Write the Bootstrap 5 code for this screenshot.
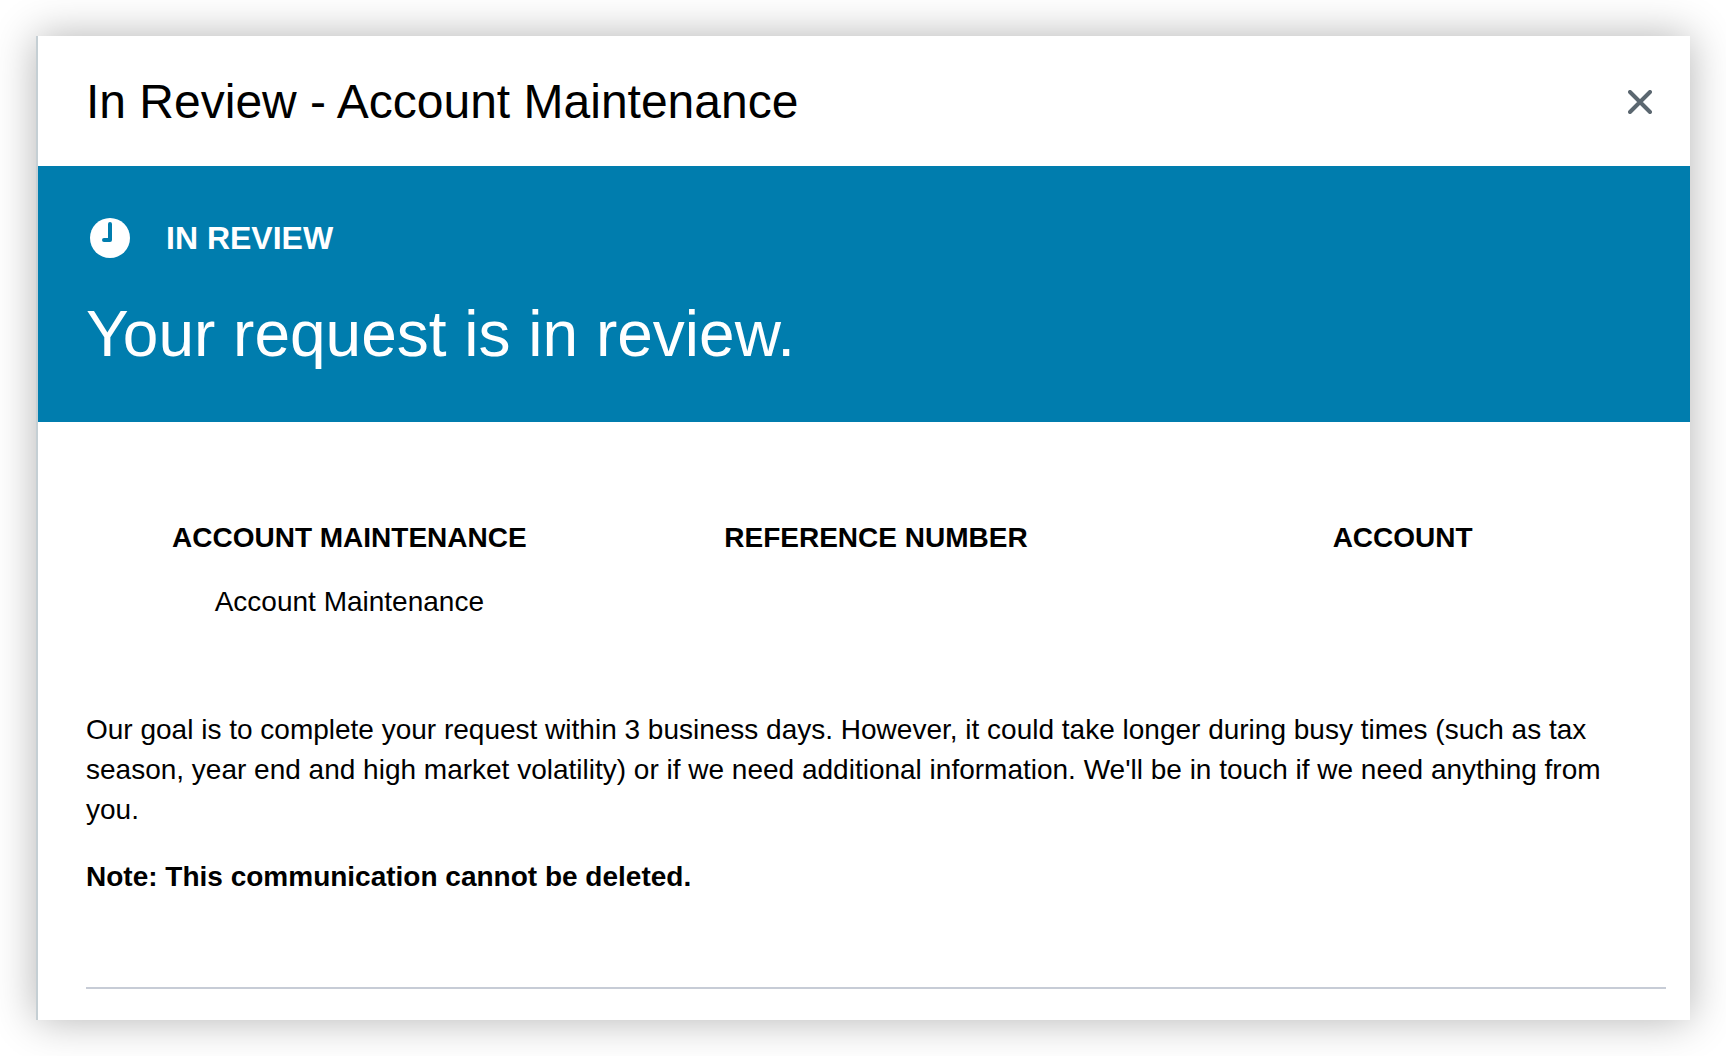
<!DOCTYPE html>
<html lang="en">
<head>
<meta charset="utf-8">
<meta name="viewport" content="width=device-width, initial-scale=1">
<title>In Review - Account Maintenance</title>
<link href="https://cdn.jsdelivr.net/npm/bootstrap@5.3.0/dist/css/bootstrap.min.css" rel="stylesheet">
<style>
body{font-family:"Liberation Sans",Arial,sans-serif;font-size:28px;line-height:40px;color:#000;background:#fff;padding:36px}
.panel{border-left:2px solid #c5cfd4;background:#fff;box-shadow:0 0 40px rgba(0,0,0,.3)}
.panel-head{padding:38px 26px 36px 48px}
.panel-title{font-size:48px;line-height:56px}
.close-btn{width:48px;height:48px;color:#5b6770}
.banner{background:#007dae;padding:48px 48px 50px}
.status{font-size:32px;line-height:48px;gap:36px;padding-left:4px;margin-bottom:34px}
.headline{font-size:64px;line-height:76px}
.panel-main{padding:96px 24px 31px 48px}
.facts{margin-bottom:88px}
.facts dt,.facts dd{line-height:40px}
.facts dt{margin-bottom:24px}
.facts dd{min-height:40px}
.message{padding-right:24px;margin-bottom:27px}
.rule{border-top:2px solid #c7ccd6;opacity:1;margin:90px 0 0}
</style>
<script src="https://cdn.jsdelivr.net/npm/bootstrap@5.3.0/dist/js/bootstrap.bundle.min.js"></script>
</head>
<body>
<main class="panel">
  <header class="panel-head d-flex justify-content-between align-items-center">
    <h1 class="panel-title fw-normal m-0">In Review - Account Maintenance</h1>
    <button type="button" class="close-btn btn p-0 border-0 d-flex align-items-center justify-content-center" aria-label="Close">
      <svg width="24" height="24" viewBox="0 0 24 24" fill="none" stroke="currentColor" stroke-width="4" stroke-linecap="round" aria-hidden="true"><path d="M2 2 22 22M22 2 2 22"/></svg>
    </button>
  </header>
  <section class="banner text-white">
    <div class="status d-flex align-items-center fw-bold">
      <svg width="40" height="40" viewBox="0 0 40 40" aria-hidden="true"><circle cx="20" cy="20" r="20" fill="#fff"/><path d="M20 6V22H14" fill="none" stroke="#007dae" stroke-width="4" stroke-linecap="round" stroke-linejoin="round"/></svg>
      <span>IN REVIEW</span>
    </div>
    <h2 class="headline fw-normal m-0">Your request is in review.</h2>
  </section>
  <section class="panel-main">
    <dl class="facts row g-0 text-center">
      <div class="col-4"><dt>ACCOUNT MAINTENANCE</dt><dd class="mb-0">Account Maintenance</dd></div>
      <div class="col-4"><dt>REFERENCE NUMBER</dt><dd class="mb-0"></dd></div>
      <div class="col-4"><dt>ACCOUNT</dt><dd class="mb-0"></dd></div>
    </dl>
    <p class="message">Our goal is to complete your request within 3 business days. However, it could take longer during busy times (such as tax season, year end and high market volatility) or if we need additional information. We'll be in touch if we need anything from you.</p>
    <p class="fw-bold mb-0">Note: This communication cannot be deleted.</p>
    <hr class="rule">
  </section>
</main>
</body>
</html>
